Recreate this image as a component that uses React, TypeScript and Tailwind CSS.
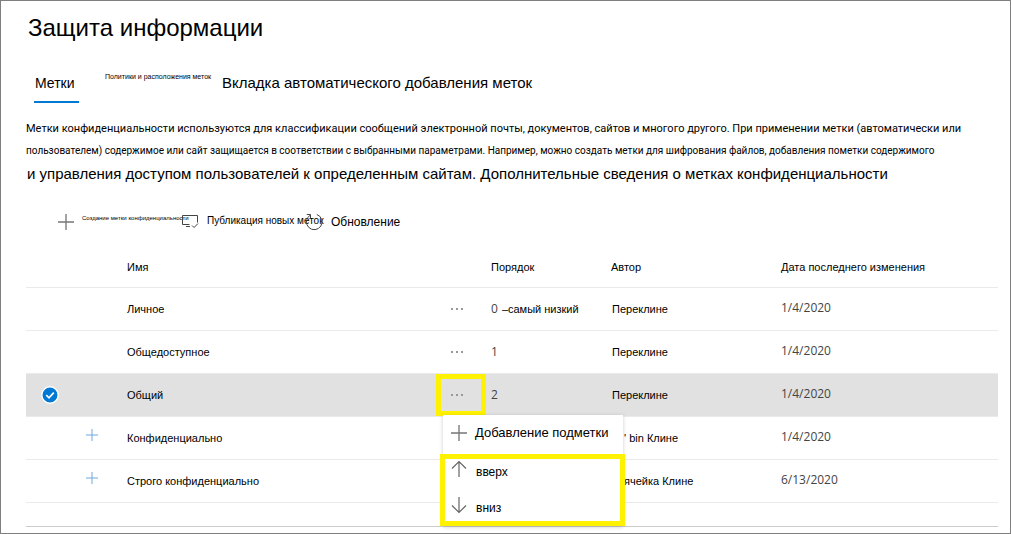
import { ReactNode } from "react";

type Row = {
  name: string;
  order?: string;
  note?: string;
  author: string;
  date: string;
  selected?: boolean;
  expandable?: boolean;
};

const rows: Row[] = [
  { name: "Личное", order: "0", note: "–самый низкий", author: "Переклине", date: "1/4/2020" },
  { name: "Общедоступное", order: "1", author: "Переклине", date: "1/4/2020" },
  { name: "Общий", order: "2", author: "Переклине", date: "1/4/2020", selected: true },
  { name: "Конфиденциально", author: "' bin Клине", date: "1/4/2020", expandable: true },
  { name: "Строго конфиденциально", author: "ячейка Клине", date: "6/13/2020", expandable: true },
];

function Glyph({ children, className = "size-[18px]" }: { children: ReactNode; className?: string }) {
  return (
    <svg viewBox="0 0 18 18" fill="none" stroke="currentColor" className={`shrink-0 ${className}`} aria-hidden="true">
      {children}
    </svg>
  );
}

function Plus({ className }: { className?: string }) {
  return (
    <Glyph className={className}>
      <path d="M0 9H18M9 0V18" strokeWidth="1.5" />
    </Glyph>
  );
}

function ContextMenu() {
  return (
    <div role="menu" className="absolute top-[41px] left-[7px] z-10 w-[180px] bg-white shadow-[0_1px_4px_rgba(0,0,0,0.2)]">
      <button role="menuitem" className="flex h-[39px] w-full items-center gap-2 pb-0.5 pl-2 text-[13px] whitespace-nowrap">
        <Plus className="size-4 text-[#777]" />
        Добавление подметки
      </button>
      <div className="-mr-0.5 -ml-[3px] h-[72px] border-5 border-[#fff200] bg-white">
        <button role="menuitem" className="flex h-[26px] w-full items-center gap-2 pl-[5px] text-xs">
          <Glyph className="-mt-1.5 size-[18px] text-[#666]">
            <path d="M9 17V1.5M2 8.5L9 1.5L16 8.5" strokeWidth="1.2" />
          </Glyph>
          вверх
        </button>
        <button role="menuitem" className="mt-2.5 flex h-[26px] w-full items-center gap-2 pl-[5px] text-xs">
          <Glyph className="-mt-1.5 size-[18px] text-[#666]">
            <path d="M9 1V16.5M2 9.5L9 16.5L16 9.5" strokeWidth="1.2" />
          </Glyph>
          вниз
        </button>
      </div>
    </div>
  );
}

function LabelRow({ row }: { row: Row }) {
  return (
    <tr className={`h-[43px] border-b border-[#eaeaea] ${row.selected ? "bg-[#e1e1e1]" : ""}`}>
      <td className="pl-[15px]">
        {row.selected && (
          <label className="relative block size-[18px]">
            <input type="checkbox" defaultChecked aria-label={row.name} className="absolute inset-0 appearance-none" />
            <Glyph>
              <circle cx="9" cy="9" r="8.2" fill="#0078d4" stroke="#fff" strokeWidth="1.4" />
              <path d="M5.3 9.2L8 11.8L12.8 6.7" stroke="#fff" strokeWidth="1.7" />
            </Glyph>
          </label>
        )}
      </td>
      <td className="pl-3">
        {row.expandable && (
          <button aria-label="Развернуть" className="mb-1.5 block">
            <Plus className="size-3 text-[#6fa8dc]" />
          </button>
        )}
      </td>
      <td className="pt-px">{row.name}</td>
      <td className="p-0">
        {row.order !== undefined && (
          <div className="relative">
            <button
              aria-label="Действия"
              className={`flex h-[42px] w-[50px] items-center border-5 pl-2.5 ${row.selected ? "border-[#fff200]" : "border-transparent"}`}
            >
              <svg viewBox="0 0 12 2" className="h-0.5 w-3" fill="#999">
                <rect width="2" height="2" />
                <rect x="5" width="2" height="2" />
                <rect x="10" width="2" height="2" />
              </svg>
            </button>
            {row.selected && <ContextMenu />}
          </div>
        )}
      </td>
      <td className="whitespace-nowrap">
        <span className="font-['Open_Sans','Noto_Sans',sans-serif] text-xs text-[#444]">{row.order}</span>
        {row.note && <span className="ml-1">{row.note}</span>}
      </td>
      <td className={`pt-px whitespace-nowrap ${row.expandable ? "pl-[13px]" : "pl-px"}`}>{row.author}</td>
      <td className="pb-0.5 font-['Open_Sans','Noto_Sans',sans-serif] text-xs text-[#444]">{row.date}</td>
    </tr>
  );
}

export default function App() {
  return (
    <main className="min-h-screen border border-[#7f7f7f] bg-white pr-3 pb-1.5 pl-[25px] font-['Liberation_Sans',Arial,sans-serif] text-black">
      <h1 className="pt-3 pl-0.5 text-2xl leading-[30px]">Защита информации</h1>

      <nav className="mt-6 flex h-[36px] items-start pl-2 whitespace-nowrap">
        <a href="#labels" className="h-[36px] w-[45px] border-b-2 border-[#0078d4] pt-1.5 pl-px text-sm leading-5">
          Метки
        </a>
        <a href="#policies" className="ml-[26px] w-[117px] pt-1 text-[7px] leading-3">
          Политики и расположения меток
        </a>
        <a href="#auto" className="pt-1.5 text-[15px] leading-5">
          Вкладка автоматического добавления меток
        </a>
      </nav>

      <p className="mt-[15px] font-[Roboto,'Noto_Sans',sans-serif]">
        <span className="block text-[11px] leading-[22px]">
          Метки конфиденциальности используются для классификации сообщений электронной почты, документов, сайтов и многого другого. При применении метки (автоматически или
        </span>
        <span className="block text-[10px] leading-[22px]">
          пользователем) содержимое или сайт защищается в соответствии с выбранными параметрами. Например, можно создать метки для шифрования файлов, добавления пометки содержимого
        </span>
        <span className="block pl-px font-['Liberation_Sans',Arial,sans-serif] text-[15px] leading-6">
          и управления доступом пользователей к определенным сайтам. Дополнительные сведения о метках конфиденциальности
        </span>
      </p>

      <div className="mt-6 flex h-6 items-center pl-8 whitespace-nowrap">
        <button className="flex w-[123px] items-center gap-2">
          <Plus className="size-4 text-[#777]" />
          <span className="pb-2 text-[6px] leading-3">Создание метки конфиденциальности</span>
        </button>
        <button className="flex w-[124px] items-center gap-2">
          <Glyph className="size-[18px] text-[#444]">
            <path d="M8.5 11.5H1.5V2.5H16.5V9.5" />
            <path d="M5 13.5H9M11 12.5L13 14.5L17 10.5" />
          </Glyph>
          <span className="pb-0.5 text-[10px] leading-4">Публикация новых меток</span>
        </button>
        <button className="flex items-center gap-2">
          <Glyph className="size-[18px] text-[#444]">
            <path d="M11.8 1.5A7.8 7.8 0 1 1 5.2 2.2M1.8 1.5H5.5V5.2" />
          </Glyph>
          <span className="text-xs leading-4">Обновление</span>
        </button>
      </div>

      <table className="mt-3 w-full table-fixed border-collapse text-left text-[11px] leading-4">
        <colgroup>
          <col className="w-12" />
          <col className="w-[53px]" />
          <col />
          <col className="w-[55px]" />
          <col className="w-[120px]" />
          <col className="w-[170px]" />
          <col className="w-[217px]" />
        </colgroup>
        <thead>
          <tr className="h-[41px] border-b border-[#eaeaea]">
            <th aria-label="Выбор" />
            <th aria-label="Развернуть" />
            <th className="pt-0.5 font-normal">Имя</th>
            <th aria-label="Действия" />
            <th className="pt-0.5 font-normal">Порядок</th>
            <th className="pt-0.5 font-normal">Автор</th>
            <th className="pt-0.5 font-normal">Дата последнего изменения</th>
          </tr>
        </thead>
        <tbody>
          {rows.map((row) => (
            <LabelRow key={row.name} row={row} />
          ))}
        </tbody>
      </table>
      <div className="h-6 border-b border-[#ccc]" />
    </main>
  );
}
